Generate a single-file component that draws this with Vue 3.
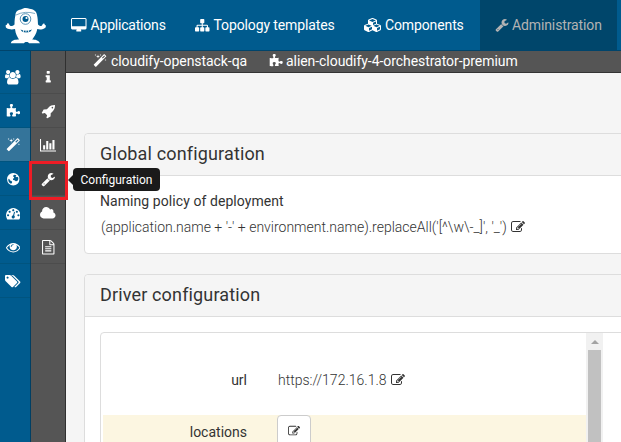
<script setup>
import { h } from 'vue'

const glyphs = {
  desktop: [1920, 'M1792 992v-832q0-13-9.5-22.5t-22.5-9.5h-1600q-13 0-22.5 9.5t-9.5 22.5v832q0 13 9.5 22.5t22.5 9.5h1600q13 0 22.5-9.5t9.5-22.5zm128-832v1088q0 66-47 113t-113 47h-544q0 37 16 77.5t32 71 16 43.5q0 26-19 45t-45 19h-512q-26 0-45-19t-19-45q0-14 16-44t32-70 16-78h-544q-66 0-113-47t-47-113v-1088q0-66 47-113t113-47h1600q66 0 113 47t47 113z'],
  sitemap: [1792, 'M1792 1248v320q0 40-28 68t-68 28h-320q-40 0-68-28t-28-68v-320q0-40 28-68t68-28h96v-192h-512v192h96q40 0 68 28t28 68v320q0 40-28 68t-68 28h-320q-40 0-68-28t-28-68v-320q0-40 28-68t68-28h96v-192h-512v192h96q40 0 68 28t28 68v320q0 40-28 68t-68 28h-320q-40 0-68-28t-28-68v-320q0-40 28-68t68-28h96v-192q0-52 38-90t90-38h512v-192h-96q-40 0-68-28t-28-68v-320q0-40 28-68t68-28h320q40 0 68 28t28 68v320q0 40-28 68t-68 28h-96v192h512q52 0 90 38t38 90v192h96q40 0 68 28t28 68z'],
  cubes: [2304, 'M640 1632l384-192v-314l-384 164v342zm-64-454l404-173-404-173-404 173zm1088 454l384-192v-314l-384 164v342zm-64-454l404-173-404-173-404 173zm-448-293l384-165v-266l-384 164v267zm-64-379l441-189-441-189-441 189zm1088 518v416q0 36-19 67t-52 47l-448 224q-25 14-57 14t-57-14l-448-224q-4-2-7-4-2 2-7 4l-448 224q-25 14-57 14t-57-14l-448-224q-33-16-52-47t-19-67v-416q0-38 21.5-70t56.5-48l434-186v-400q0-38 21.5-70t56.5-48l448-192q23-10 50-10t50 10l448 192q35 16 56.5 48t21.5 70v400l434 186q36 16 57 48t21 70z'],
  wrench: [1792, 'M448 1472q0-26-19-45t-45-19-45 19-19 45 19 45 45 19 45-19 19-45zm644-420l-682 682q-37 37-90 37-52 0-91-37l-106-108q-38-36-38-90 0-53 38-91l681-681q39 98 114.5 173.5t173.5 114.5zm634-435q0 39-23 106-47 134-164.5 217.5t-258.5 83.5q-185 0-316.5-131.5t-131.5-316.5 131.5-316.5 316.5-131.5q58 0 121.5 16.5t107.5 46.5q16 11 16 28t-16 28l-293 169v224l193 107q5-3 79-48.5t135.5-81 70.5-35.5q15 0 23.5 10t8.5 25z'],
  magic: [1792, 'M1254 581l293-293-107-107-293 293zm447-293q0 27-18 45l-1286 1286q-18 18-45 18t-45-18l-198-198q-18-18-18-45t18-45l1286-1286q18-18 45-18t45 18l198 198q18 18 18 45zm-1351-190l98 30-98 30-30 98-30-98-98-30 98-30 30-98zm350 162l196 60-196 60-60 196-60-196-196-60 196-60 60-196zm930 478l98 30-98 30-30 98-30-98-98-30 98-30 30-98zm-640-640l98 30-98 30-30 98-30-98-98-30 98-30 30-98z'],
  puzzle: [1792, 'M1755 1082q0 81-44.5 135t-123.5 54q-41 0-77.5-17.5t-59-38-56.5-38-71-17.5q-110 0-110 124 0 39 16 115t15 115v5q-22 0-33 1-34 3-97.5 11.5t-115.5 13.5-98 5q-61 0-103-26.5t-42-83.5q0-37 17.5-71t38-56.5 38-59 17.5-77.5q0-79-54-123.5t-135-44.5q-84 0-143 45.5t-59 127.5q0 43 15 83t33.5 64.5 33.5 53 15 50.5q0 45-46 89-37 35-117 35-95 0-245-24-9-2-27.5-4t-27.5-4l-13-2q-1 0-3-1-2 0-2-1v-1024q2 1 17.5 3.5t34 5 21.5 3.5q150 24 245 24 80 0 117-35 46-44 46-89 0-22-15-50.5t-33.5-53-33.5-64.5-15-83q0-82 59-127.5t144-45.5q80 0 134 44.5t54 123.5q0 41-17.5 77.5t-38 59-38 56.5-17.5 71q0 57 42 83.5t103 26.5q64 0 180-15t163-17v2q-1 2-3.5 17.5t-5 34-3.5 21.5q-24 150-24 245 0 80 35 117 44 46 89 46 22 0 50.5-15t53-33.5 64.5-33.5 83-15q82 0 127.5 59t45.5 143z'],
  users: [1920, 'M593 896q-162 5-265 128h-134q-82 0-138-40.5t-56-118.5q0-353 124-353 6 0 43.5 21t97.5 42.5 119 21.5q67 0 133-23-5 37-5 66 0 159 93 287zm1071 637q0 120-73 189.5t-194 69.5h-874q-121 0-194-69.5t-73-189.5q0-53 3.5-103.5t14-109 26.5-108.5 43-97.5 62-81 85.5-53.5 111.5-20q10 0 43 21.5t73 48 107 48 135 21.5 135-21.5 107-48 73-48 43-21.5q61 0 111.5 20t85.5 53.5 62 81 43 97.5 26.5 108.5 14 109 3.5 103.5zm-1024-1277q0 106-75 181t-181 75-181-75-75-181 75-181 181-75 181 75 75 181zm704 384q0 159-112.5 271.5t-271.5 112.5-271.5-112.5-112.5-271.5 112.5-271.5 271.5-112.5 271.5 112.5 112.5 271.5zm576 225q0 78-56 118.5t-138 40.5h-134q-103-123-265-128 93-128 93-287 0-29-5-66 66 23 133 23 59 0 119-21.5t97.5-42.5 43.5-21q124 0 124 353zm-128-609q0 106-75 181t-181 75-181-75-75-181 75-181 181-75 181 75 75 181z'],
  globe: [1792, 'M896 128a768 768 0 1 1 0 1536a768 768 0 1 1 0-1536zM1040 330l-110 60-70 130 120 90 30 120-150 100 20 150 170 30 160 130 190-40 130-230-30-230-160-60-100 60-50-100 100-100-90-70zM340 830l-60 100 30 200 140 220 180 100 110-110 20-140-140-110-130-40-60-150z'],
  gauge: [1792, 'M384 1152q0-53-37.5-90.5t-90.5-37.5-90.5 37.5-37.5 90.5 37.5 90.5 90.5 37.5 90.5-37.5 37.5-90.5zm192-448q0-53-37.5-90.5t-90.5-37.5-90.5 37.5-37.5 90.5 37.5 90.5 90.5 37.5 90.5-37.5 37.5-90.5zm428 481l101-382q6-26-7.5-48.5t-38.5-29.5-48 6.5-30 39.5l-101 382q-60 5-107 43.5t-63 98.5q-20 77 20 146t117 89 146-20 89-117q16-60-6-117t-72-91zm660-33q0-53-37.5-90.5t-90.5-37.5-90.5 37.5-37.5 90.5 37.5 90.5 90.5 37.5 90.5-37.5 37.5-90.5zm-640-640q0-53-37.5-90.5t-90.5-37.5-90.5 37.5-37.5 90.5 37.5 90.5 90.5 37.5 90.5-37.5 37.5-90.5zm448 192q0-53-37.5-90.5t-90.5-37.5-90.5 37.5-37.5 90.5 37.5 90.5 90.5 37.5 90.5-37.5 37.5-90.5zm320 448q0 261-141 483-19 29-54 29h-1402q-35 0-54-29-141-221-141-483 0-182 71-348t191-286 286-191 348-71 348 71 286 191 191 286 71 348z'],
  eye: [1792, 'M1664 960q-152-236-381-353 61 104 61 225 0 185-131.5 316.5t-316.5 131.5-316.5-131.5-131.5-316.5q0-121 61-225-229 117-381 353 133 205 333.5 326.5t434.5 121.5 434.5-121.5 333.5-326.5zm-720-384q0-20-14-34t-34-14q-125 0-214.5 89.5t-89.5 214.5q0 20 14 34t34 14 34-14 14-34q0-86 61-147t147-61q20 0 34-14t14-34zm848 384q0 34-20 69-140 230-376.5 368.5t-499.5 138.5-499.5-139-376.5-368q-20-35-20-69t20-69q140-229 376.5-368t499.5-139 499.5 139 376.5 368q20 35 20 69z'],
  tags: [1920, 'M448 448q0-53-37.5-90.5t-90.5-37.5-90.5 37.5-37.5 90.5 37.5 90.5 90.5 37.5 90.5-37.5 37.5-90.5zm1067 576q0 53-37 90l-491 492q-39 37-91 37-53 0-90-37l-715-716q-38-37-64.5-101t-26.5-117v-416q0-52 38-90t90-38h416q53 0 117 26.5t102 64.5l715 714q37 39 37 91zm384 0q0 53-37 90l-491 492q-39 37-91 37-36 0-59-14t-53-45l470-470q37-37 37-90 0-52-37-91l-715-714q-38-38-102-64.5t-117-26.5h224q53 0 117 26.5t102 64.5l715 714q37 39 37 91z'],
  info: [1792, 'M1216 1344v128q0 26-19 45t-45 19h-512q-26 0-45-19t-19-45v-128q0-26 19-45t45-19h64v-384h-64q-26 0-45-19t-19-45v-128q0-26 19-45t45-19h384q26 0 45 19t19 45v576h64q26 0 45 19t19 45zm-128-1152v192q0 26-19 45t-45 19h-256q-26 0-45-19t-19-45v-192q0-26 19-45t45-19h256q26 0 45 19t19 45z'],
  rocket: [1792, 'M1504 448q0-40-28-68t-68-28-68 28-28 68 28 68 68 28 68-28 28-68zm224-288q0 249-75.5 430.5t-253.5 360.5q-81 80-195 176l-20 379q-2 16-16 26l-384 224q-7 4-16 4-12 0-23-9l-64-64q-13-14-8-32l85-276-281-281-276 85q-3 1-9 1-14 0-23-9l-64-64q-17-19-5-39l224-384q10-14 26-16l379-20q96-114 176-195 188-187 358-258t431-71q14 0 24 9.5t10 22.5z'],
  chart: [2048, 'M640 896v512h-256v-512h256zm384-512v1024h-256v-1024h256zm1024 1152v128h-2048v-1536h128v1408h1920zm-640-896v768h-256v-768h256zm384-384v1152h-256v-1152h256z'],
  cloud: [1920, 'M1920 1152q0 159-112.5 271.5t-271.5 112.5h-1088q-185 0-316.5-131.5t-131.5-316.5q0-132 71-241.5t187-163.5q-2-28-2-43 0-212 150-362t362-150q158 0 286.5 88t187.5 230q70-62 166-62 106 0 181 75t75 181q0 75-41 138 129 30 213 134.5t84 239.5z'],
  file: [1792, 'M1596 380q28 28 48 76t20 88v1152q0 40-28 68t-68 28h-1344q-40 0-68-28t-28-68v-1600q0-40 28-68t68-28h896q40 0 88 20t76 48zm-444-244v376h376q-10-29-22-41l-313-313q-12-12-41-22zm384 1528v-1024h-416q-40 0-68-28t-28-68v-416h-768v1536h1280zm-1024-864q0-14 9-23t23-9h704q14 0 23 9t9 23v64q0 14-9 23t-23 9h-704q-14 0-23-9t-9-23v-64zm736 224q14 0 23 9t9 23v64q0 14-9 23t-23 9h-704q-14 0-23-9t-9-23v-64q0-14 9-23t23-9h704zm0 256q14 0 23 9t9 23v64q0 14-9 23t-23 9h-704q-14 0-23-9t-9-23v-64q0-14 9-23t23-9h704z'],
  edit: [1792, 'M888 1184l116-116-152-152-116 116v56h96v96h56zm440-720q-16-16-33 1l-350 350q-17 17-1 33t33-1l350-350q17-17 1-33zm80 594v190q0 119-84.5 203.5t-203.5 84.5h-832q-119 0-203.5-84.5t-84.5-203.5v-832q0-119 84.5-203.5t203.5-84.5h832q63 0 117 25 15 7 18 23 3 17-9 29l-49 49q-14 14-32 8-23-6-45-6h-832q-66 0-113 47t-47 113v832q0 66 47 113t113 47h832q66 0 113-47t47-113v-126q0-13 9-22l64-64q15-15 35-7t20 29zm-96-738l288 288-672 672h-288v-288zm444 132l-92 92-288-288 92-92q28-28 68-28t68 28l152 152q28 28 28 68t-28 68z'],
}

const Icon = (props) => {
  const [w, d] = glyphs[props.name]
  const size = props.size || 15
  return h('svg', { class: 'icon', viewBox: `0 0 ${w} 1792`, width: (w / 1792) * size, height: size }, [
    h('path', { d, fill: 'currentColor', 'fill-rule': props.name === 'globe' ? 'evenodd' : 'nonzero' }),
  ])
}
Icon.props = ['name', 'size']

const adminItems = ['users', 'puzzle', 'magic', 'globe', 'gauge', 'eye', 'tags']
const orchestratorItems = ['info', 'rocket', 'chart', 'wrench', 'cloud', 'file']
const policy = "(application.name + '-' + environment.name).replaceAll('[^\\w\\-_]', '_')"
</script>

<template>
  <div class="app">
    <header class="navbar">
      <svg class="logo" viewBox="0 0 42 38" width="42" height="38">
        <path fill="#fff" d="M10.500 8C10.500 4.500 13 3.200 16 2.600C18 .8 22 .5 24.500 1.800C28 2.200 31.500 4 32 8C32.800 11 32.800 14 33 17.500C35.500 19.500 36.500 19.500 37.500 17.500C38.300 15.800 40 16.300 39.800 18L41 18.500C40.600 19.500 41 20.500 40 21C37 22.800 34.500 22.800 32.300 22C31.500 27 28.500 30.500 27.200 32.500C30 32.600 33.500 33 35 36.200H24C23.500 35.500 22.800 35 21.500 35C20.200 35 19.500 35.500 19 36.200H5.800C6.500 33 10 32.600 14 32.500C12.500 30 10.500 27 10 22C7 22.800 4 22.600 1.500 21C.5 20.500 1 19.500 .5 18.500L1.800 17.800C1.800 16 3.600 15.600 4.200 17.500C5.200 19.500 7.500 19.500 9.500 17.500C9.500 13 10 10 10.500 8Z" />
        <path d="M11 8Q20 3.500 30 6.500" fill="none" stroke="#4b8aae" stroke-width=".7" />
        <circle cx="20.500" cy="12" r="5.300" fill="#fff" stroke="#2f79a3" stroke-width=".8" />
        <circle cx="20.500" cy="12" r="3" fill="#005b8e" />
        <circle cx="21.500" cy="11" r="1.100" fill="#fff" />
        <path d="M15.500 22.500Q21 25 27 22.500L25.500 24.500Q21 26.500 17 24.500Z" fill="#005b8e" />
        <path d="M18.500 23v2M21 23.500v2M23.500 23v2" stroke="#fff" stroke-width=".8" />
      </svg>
      <nav class="menu">
        <a class="link applications"><Icon name="desktop" :size="14.500" />Applications</a>
        <a class="link topology"><Icon name="sitemap" :size="14.500" />Topology templates</a>
        <a class="link components"><Icon name="cubes" :size="14" />Components</a>
        <a class="link administration"><Icon name="wrench" :size="14" />Administration</a>
      </nav>
    </header>
    <div class="body">
      <aside class="side blue">
        <a v-for="name in adminItems" :key="name" class="cell" :class="{ active: name === 'magic' }"><Icon :name="name" :size="14.500" /></a>
      </aside>
      <aside class="side grey">
        <a v-for="name in orchestratorItems" :key="name" class="cell" :class="{ active: name === 'wrench' }">
          <Icon :name="name" :size="14.500" />
          <template v-if="name === 'wrench'">
            <span class="marker"></span>
            <span class="tooltip">Configuration</span>
          </template>
        </a>
      </aside>
      <main class="main">
        <div class="crumbs">
          <span class="crumb first"><Icon name="magic" :size="14" />cloudify-openstack-qa</span>
          <span class="crumb second"><Icon name="puzzle" :size="14" />alien-cloudify-4-orchestrator-premium</span>
        </div>
        <div class="content">
          <section class="panel">
            <h3 class="title">Global configuration</h3>
            <div class="panel-body policy">
              <div class="label">Naming policy of deployment</div>
              <div class="value expression"><span>{{ policy }}</span><Icon name="edit" :size="14" /></div>
            </div>
          </section>
          <section class="panel">
            <h3 class="title">Driver configuration</h3>
            <div class="panel-body">
              <div class="form-box">
                <div class="rows">
                  <div class="row">
                    <span class="key">url</span>
                    <span class="value url"><span>https://172.16.1.8</span><Icon name="edit" :size="14" /></span>
                  </div>
                  <div class="row warn">
                    <span class="key">locations</span>
                    <button class="btn"><Icon name="edit" :size="12" /></button>
                  </div>
                </div>
                <div class="scrollbar"><span class="arrow"></span><span class="thumb"></span></div>
              </div>
            </div>
          </section>
        </div>
      </main>
    </div>
  </div>
</template>

<style>
body { margin: 0; overflow: hidden; }
</style>

<style scoped>
.app { width: 621px; height: 442px; overflow: hidden; display: flex; flex-direction: column; background: #f5f5f5; font-family: Roboto, "Liberation Sans", sans-serif; font-size: 14px; color: #333; }
.app * { box-sizing: border-box; }
.icon { display: block; flex: none; }
.navbar { flex: none; height: 51px; display: flex; background: #005b8e; border-bottom: 1px solid #00446b; }
.logo { flex: none; margin: 7px 0 0 5px; }
.menu { display: flex; height: 50px; margin-left: 9px; }
.link { display: flex; align-items: center; gap: 4px; padding: 0 15px; font-size: 14px; letter-spacing: -.12px; color: #fff; white-space: nowrap; flex: none; }
.applications { width: 124px; letter-spacing: -.2px; }
.topology { width: 169px; }
.components { width: 131px; gap: 3px; }
.administration { width: 137px; gap: 3px; background: #00466b; color: #b3b3b3; }
.body { flex: 1; display: flex; min-height: 0; }
.side { flex: none; display: flex; flex-direction: column; padding-top: 9px; color: #fff; }
.blue { width: 31px; background: #005b8e; border-right: 1px solid #003f63; }
.grey { width: 35px; background: #555; border-right: 1px solid #303030; }
.cell { flex: none; height: 34px; display: flex; align-items: center; justify-content: center; position: relative; padding-top: 2px; border-bottom: 1px solid #4c4c4c; }
.blue .cell { border-color: #00547f; padding-right: 4px; }
.blue .active { background: #34749a; }
.grey .active { background: #444; }
.marker { position: absolute; left: -2px; top: -1px; width: 39px; height: 39px; border: 3px solid #ee1c25; }
.tooltip { position: absolute; z-index: 2; left: 42px; top: 6px; height: 23px; width: 87px; display: flex; align-items: center; justify-content: center; border-radius: 4px; background: #1a1a1a; font-size: 12px; }
.tooltip::before { content: ""; position: absolute; left: -5px; top: 7px; border: 5px solid transparent; border-left: 0; border-right-color: #1a1a1a; }
.main { flex: 1; min-width: 0; }
.crumbs { height: 22px; display: flex; padding-bottom: 1px; background: #555; border-bottom: 1px solid #333; color: #fff; letter-spacing: -.06px; }
.crumb { display: flex; align-items: center; gap: 3px; white-space: nowrap; }
.first { margin-left: 27px; width: 176px; gap: 4px; }
.content { width: 570px; padding: 60px 0 0 18px; }
.panel { background: #fff; border: 1px solid #ddd; border-radius: 4px; margin-bottom: 20px; }
.title { margin: 0; height: 42px; padding: 0 0 2px 15px; display: flex; align-items: center; background: #f5f5f5; border-bottom: 1px solid #ddd; border-radius: 4px 4px 0 0; font-weight: 400; font-size: 18px; letter-spacing: .15px; }
.panel-body { padding: 15px 0 0 15px; }
.policy { height: 77px; }
.label { height: 20px; line-height: 20px; letter-spacing: .07px; }
.value { height: 32px; display: flex; align-items: center; gap: 4px; font-weight: 300; }
.expression { padding-left: 1px; }
.form-box { height: 150px; display: flex; border: 1px solid #ddd; border-radius: 4px; }
.rows { width: 485px; padding: 15px 0 0 2px; }
.row { display: flex; align-items: center; height: 67px; padding-bottom: 4px; }
.key { width: 144px; text-align: right; flex: none; }
.url { margin-left: 31px; }
.warn { background: #fcf6e1; align-items: flex-start; height: 70px; padding: 0; }
.warn .key { line-height: 34px; }
.btn { margin: 0 0 0 30px; padding: 0; width: 34px; height: 32px; display: flex; align-items: center; justify-content: center; border: 1px solid #ccc; border-radius: 4px; background: #fff; color: #333; }
.scrollbar { width: 17px; background: #f1f1f1; display: flex; flex-direction: column; align-items: center; }
.arrow { height: 4px; margin: 7px 0 6px; border: 4px solid transparent; border-top: 0; border-bottom-color: #a3a3a3; }
.thumb { width: 13px; flex: 1; background: #c1c1c1; }
</style>
